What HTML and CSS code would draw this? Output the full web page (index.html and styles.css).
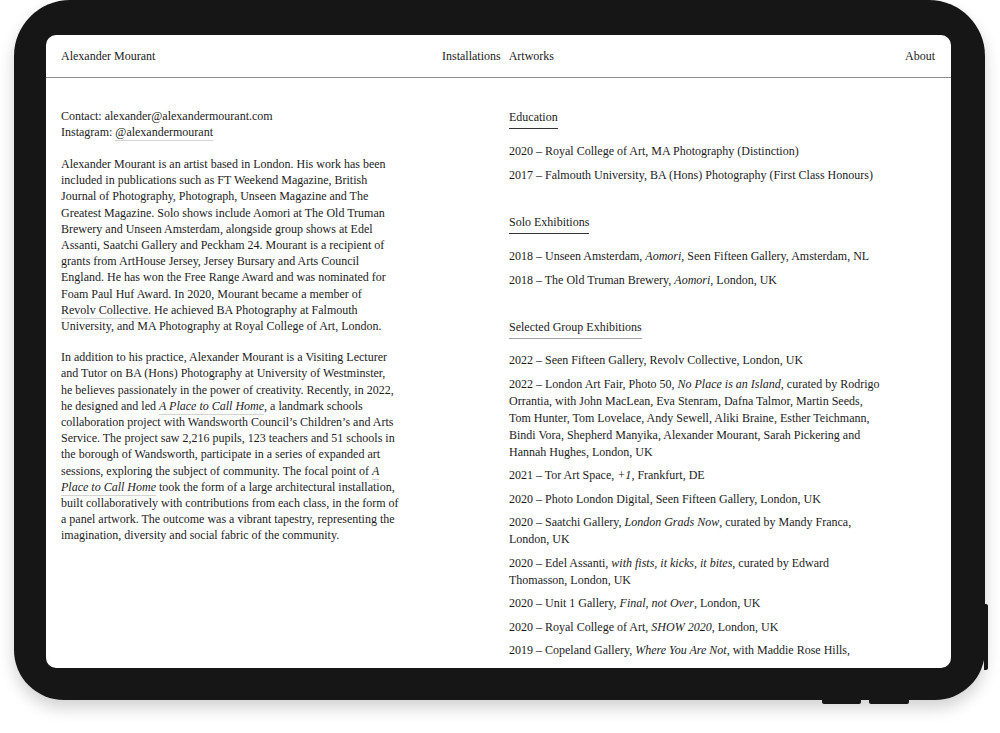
FILE: index.html
```html
<!DOCTYPE html>
<html lang="en">
<head>
<meta charset="utf-8">
<title>Alexander Mourant – About</title>
<link rel="stylesheet" href="styles.css">
</head>
<body>
<div class="stage">
  <div class="device">
    <span class="side-btn"></span>
    <span class="bottom-btn bottom-btn-a"></span>
    <span class="bottom-btn bottom-btn-b"></span>
    <div class="screen">
      <header class="site-header">
        <a class="brand" href="#">Alexander Mourant</a>
        <nav class="main-nav">
          <a href="#">Installations</a>
          <a href="#">Artworks</a>
        </nav>
        <a class="about-link" href="#">About</a>
      </header>
      <main class="content">
        <section class="bio">
          <p class="contact">Contact: alexander@alexandermourant.com<br>Instagram: <a class="ul" href="#">@alexandermourant</a></p>
          <p class="para">Alexander Mourant is an artist based in London. His work has been<br>included in publications such as FT Weekend Magazine, British<br>Journal of Photography, Photograph, Unseen Magazine and The<br>Greatest Magazine. Solo shows include Aomori at The Old Truman<br>Brewery and Unseen Amsterdam, alongside group shows at Edel<br>Assanti, Saatchi Gallery and Peckham 24. Mourant is a recipient of<br>grants from ArtHouse Jersey, Jersey Bursary and Arts Council<br>England. He has won the Free Range Award and was nominated for<br>Foam Paul Huf Award. In 2020, Mourant became a member of<br><a class="ul" href="#">Revolv Collective</a>. He achieved BA Photography at Falmouth<br>University, and MA Photography at Royal College of Art, London.</p>
          <p class="para">In addition to his practice, Alexander Mourant is a Visiting Lecturer<br>and Tutor on BA (Hons) Photography at University of Westminster,<br>he believes passionately in the power of creativity. Recently, in 2022,<br>he designed and led <a class="ul" href="#"><em>A Place to Call Home</em></a>, a landmark schools<br>collaboration project with Wandsworth Council’s Children’s and Arts<br>Service. The project saw 2,216 pupils, 123 teachers and 51 schools in<br>the borough of Wandsworth, participate in a series of expanded art<br>sessions, exploring the subject of community. The focal point of <a class="ul" href="#"><em>A</em></a><br><a class="ul" href="#"><em>Place to Call Home</em></a> took the form of a large architectural installation,<br>built collaboratively with contributions from each class, in the form of<br>a panel artwork. The outcome was a vibrant tapestry, representing the<br>imagination, diversity and social fabric of the community.</p>
        </section>
        <section class="cv">
          <div class="cv-block">
            <h2 class="cv-title">Education</h2>
            <ul class="cv-list">
              <li>2020 – Royal College of Art, MA Photography (Distinction)</li>
              <li>2017 – Falmouth University, BA (Hons) Photography (First Class Honours)</li>
            </ul>
          </div>
          <div class="cv-block">
            <h2 class="cv-title">Solo Exhibitions</h2>
            <ul class="cv-list">
              <li>2018 – Unseen Amsterdam, <em>Aomori</em>, Seen Fifteen Gallery, Amsterdam, NL</li>
              <li>2018 – The Old Truman Brewery, <em>Aomori</em>, London, UK</li>
            </ul>
          </div>
          <div class="cv-block">
            <h2 class="cv-title cv-title-light">Selected Group Exhibitions</h2>
            <ul class="cv-list">
              <li>2022 – Seen Fifteen Gallery, Revolv Collective, London, UK</li>
              <li>2022 – London Art Fair, Photo 50, <em>No Place is an Island</em>, curated by Rodrigo<br>Orrantia, with John MacLean, Eva Stenram, Dafna Talmor, Martin Seeds,<br>Tom Hunter, Tom Lovelace, Andy Sewell, Aliki Braine, Esther Teichmann,<br>Bindi Vora, Shepherd Manyika, Alexander Mourant, Sarah Pickering and<br>Hannah Hughes, London, UK</li>
              <li>2021 – Tor Art Space, <em>+1</em>, Frankfurt, DE</li>
              <li>2020 – Photo London Digital, Seen Fifteen Gallery, London, UK</li>
              <li>2020 – Saatchi Gallery, <em>London Grads Now</em>, curated by Mandy Franca,<br>London, UK</li>
              <li>2020 – Edel Assanti, <em>with fists, it kicks, it bites</em>, curated by Edward<br>Thomasson, London, UK</li>
              <li>2020 – Unit 1 Gallery, <em>Final, not Over</em>, London, UK</li>
              <li>2020 – Royal College of Art, <em>SHOW 2020</em>, London, UK</li>
              <li>2019 – Copeland Gallery, <em>Where You Are Not</em>, with Maddie Rose Hills,</li>
            </ul>
          </div>
        </section>
      </main>
    </div>
  </div>
</div>
</body>
</html>
```

FILE: styles.css
```css
* {
  box-sizing: border-box;
}

html,
body {
  margin: 0;
  padding: 0;
  background: #ffffff;
}

body {
  width: 1000px;
  height: 733px;
  overflow: hidden;
  font-family: "Liberation Serif", "DejaVu Serif", serif;
  color: #1c1c1c;
  font-size: 12px;
}

a {
  color: inherit;
  text-decoration: none;
}

.stage {
  padding-left: 14px;
}

.device {
  position: relative;
  width: 971px;
  height: 700px;
  padding: 35px 34px 32px 32px;
  background: #161616;
  border-radius: 56px 56px 50px 50px;
  box-shadow: 0 8px 16px rgba(0, 0, 0, 0.18);
}

.side-btn {
  position: absolute;
  right: -3px;
  top: 604px;
  width: 4px;
  height: 66px;
  background: #161616;
  border-radius: 0 2px 2px 0;
}

.bottom-btn {
  position: absolute;
  bottom: -4px;
  height: 5px;
  background: #161616;
  border-radius: 0 0 2px 2px;
}

.bottom-btn-a {
  left: 808px;
  width: 39px;
}

.bottom-btn-b {
  left: 855px;
  width: 40px;
}

.screen {
  height: 100%;
  background: #ffffff;
  border-radius: 10px;
  overflow: hidden;
}

.site-header {
  height: 43px;
  display: grid;
  grid-template-columns: 1fr auto 1fr;
  align-items: center;
  padding: 0 16px 0 15px;
  border-bottom: 1px solid #8c8c8c;
  font-size: 12px;
}

.main-nav {
  display: flex;
  gap: 8px;
}

.about-link {
  justify-self: end;
}

.content {
  display: grid;
  grid-template-columns: 1fr 1fr;
  column-gap: 21px;
  padding: 30px 15px 0;
}

.bio p {
  margin: 0;
  line-height: 16.2px;
  white-space: nowrap;
}

.bio .contact {
  line-height: 16px;
  margin-bottom: 16px;
}

.bio .para {
  margin-bottom: 15px;
}

.ul {
  border-bottom: 1px solid #d4d4d4;
  padding-bottom: 1px;
}

.cv {
  padding-top: 1px;
}

.cv-block {
  margin-bottom: 30.5px;
}

.cv-title {
  display: inline-block;
  margin: 0 0 14px;
  padding-bottom: 3px;
  font-size: 12px;
  font-weight: normal;
  line-height: 16px;
  border-bottom: 1px solid #333333;
}

.cv-title-light {
  border-bottom-color: #a3a3a3;
  margin-bottom: 13px;
}

.cv-list {
  list-style: none;
  margin: 0;
  padding: 0;
}

.cv-list li {
  line-height: 17px;
  margin-bottom: 6.5px;
  white-space: nowrap;
}
```
